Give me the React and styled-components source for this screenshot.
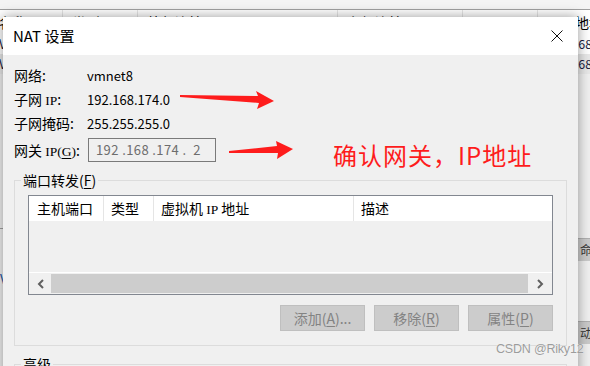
import React from "react";
import styled, { createGlobalStyle } from "styled-components";

const UI_FONT = `"Noto Sans CJK SC", "Noto Sans", sans-serif`;

const GlobalStyle = createGlobalStyle`
  html, body {
    margin: 0;
    padding: 0;
  }
  body {
    background: #f0f0f0;
    font-family: ${UI_FONT};
    overflow: hidden;
  }
`;

const Screen = styled.div`
  position: relative;
  width: 590px;
  height: 366px;
  overflow: hidden;
  background: #f0f0f0;
  color: #000;
`;

/* ---- the window behind the dialog ---- */

const BackWindow = styled.div`
  display: flex;
  flex-direction: column;
  height: 100%;
`;

const TopStrip = styled.div`
  height: 9px;
  background: #f4f4f4;
  border-bottom: 1px solid #a0a0a0;
`;

const BgTable = styled.div`
  margin-left: -3px;
  background: #fff;
`;

const BgLine = styled.div`
  display: flex;
  height: ${(p) => (p.$head ? 24 : 20)}px;
  background: ${(p) => (p.$selected ? "#e8e8e8" : "#fff")};
`;

const BgCell = styled.div`
  flex-shrink: 0;
  width: ${(p) => p.$w}px;
  padding-left: ${(p) => (p.$first ? 2 : 9)}px;
  box-sizing: border-box;
  border-right: ${(p) => (p.$head ? "1px solid #e5e5e5" : "none")};
  font-size: ${(p) => (p.$head ? 14 : 12.5)}px;
  line-height: ${(p) => (p.$head ? 24 : 20)}px;
  color: ${(p) => (p.$head ? "#000" : "#1a1a40")};
  white-space: nowrap;
  overflow: hidden;
`;

const BgLower = styled.div`
  flex: 1;
  display: flex;
`;

const BgMain = styled.div`
  flex: 1;
  margin-top: 154px;
  border-top: 1px solid #a0a0a0;
  padding: 40px 0 0 0;
  font-size: 13px;
  color: #2050a0;
`;

const BgSide = styled.div`
  width: 12px;
  margin-top: 164px;
  display: flex;
  flex-direction: column;
`;

const BgSideItem = styled.div`
  height: 22px;
  margin-top: ${(p) => p.$gap}px;
  padding-left: 2px;
  background: #cacaca;
  border-top: 1px solid #b0b0b0;
  font-size: 12px;
  line-height: 22px;
  white-space: nowrap;
  overflow: hidden;
  color: #333;
`;

/* ---- dialog ---- */

const Dialog = styled.section`
  position: absolute;
  left: 3px;
  top: 17px;
  width: 575px;
  height: 372px;
  background: #f0f0f0;
  box-shadow: 0 0 12px rgba(0, 0, 0, 0.4);
  display: flex;
  flex-direction: column;
`;

const TitleBar = styled.header`
  height: 38px;
  flex-shrink: 0;
  background: #fff;
  display: flex;
  align-items: center;
  justify-content: space-between;
  padding: 0 15px 0 10px;
`;

const Title = styled.h1`
  margin: 0;
  font-size: 15px;
  font-weight: 400;
  line-height: 20px;
`;

const CloseButton = styled.button`
  border: 0;
  padding: 0;
  background: transparent;
  width: 12px;
  height: 12px;
  display: flex;
`;

const Body = styled.div`
  padding: 8px 11px 0 11px;
  display: flex;
  flex-direction: column;
`;

const InfoRow = styled.div`
  display: flex;
  align-items: center;
  height: 24px;
  margin-top: ${(p) => p.$gap || 0}px;
`;

const Label = styled.span`
  width: 73px;
  flex-shrink: 0;
  font-size: 14px;
  white-space: nowrap;
`;

const Latin = styled.span`
  font-family: "Liberation Serif", serif;
  font-size: 13.5px;
`;

const Key = styled.span`
  text-decoration: underline;
  text-underline-offset: 2px;
`;

const Value = styled.span`
  font-size: 13px;
`;

const IpInput = styled.div`
  width: 128px;
  height: 24px;
  box-sizing: border-box;
  border: 1px solid #7a7a7a;
  padding-left: 7px;
  margin-left: 1px;
  color: #6d6d6d;
  font-size: 13px;
  line-height: 22px;
  letter-spacing: 0.4px;
  white-space: pre;
`;

const Group = styled.fieldset`
  margin: ${(p) => p.$top}px 0 0;
  padding: 6px 13px 14px;
  border: 1px solid #dcdcdc;
  min-width: 0;
`;

const Legend = styled.legend`
  margin-left: -7px;
  padding: 0 2px;
  font-size: 14px;
  line-height: 18px;
`;

const ListView = styled.div`
  height: 100px;
  box-sizing: border-box;
  border: 1px solid #828790;
  display: flex;
  flex-direction: column;
  background: #f0f0f0;
`;

const ListHeader = styled.div`
  display: flex;
  height: 25px;
  flex-shrink: 0;
  background: #fff;
`;

const HeaderCell = styled.div`
  width: ${(p) => (p.$w ? `${p.$w}px` : "auto")};
  flex: ${(p) => (p.$w ? "0 0 auto" : "1")};
  box-sizing: border-box;
  padding-left: ${(p) => p.$pad || 7}px;
  border-right: ${(p) => (p.$w ? "1px solid #e5e5e5" : "none")};
  font-size: 14px;
  line-height: 25px;
  white-space: nowrap;
`;

const ListBody = styled.div`
  flex: 1;
  border-bottom: 1px solid #fff;
`;

const HScroll = styled.div`
  height: 21px;
  flex-shrink: 0;
  display: flex;
`;

const ScrollButton = styled.div`
  width: ${(p) => p.$w}px;
  flex-shrink: 0;
  display: flex;
  align-items: center;
  justify-content: center;
`;

const ScrollTrack = styled.div`
  flex: 1;
  margin: 1px 0;
  background: #cdcdcd;
`;

const ButtonRow = styled.div`
  display: flex;
  justify-content: flex-end;
  gap: 9px;
  margin-top: 10px;
`;

const Button = styled.button`
  width: 85px;
  height: 26px;
  box-sizing: border-box;
  background: #cccccc;
  border: 1px solid #bfbfbf;
  color: #838383;
  font-family: ${UI_FONT};
  font-size: 14px;
  line-height: 24px;
  padding: 0;
`;

/* ---- annotations on top ---- */

const Arrow = styled.svg`
  position: absolute;
  left: ${(p) => p.$x}px;
  top: ${(p) => p.$y}px;
`;

const Note = styled.div`
  position: absolute;
  left: 333px;
  top: 143px;
  font-size: 24px;
  line-height: 24px;
  letter-spacing: 1px;
  color: #fe1c1c;
  white-space: nowrap;
`;

const Watermark = styled.div`
  position: absolute;
  left: 496px;
  top: 342px;
  font-family: "Liberation Sans", sans-serif;
  font-size: 12.5px;
  line-height: 14px;
  letter-spacing: -0.2px;
  color: #9c9c9c;
  text-shadow: 0 0 1px #fff;
`;

const bgCols = [66, 75, 200, 125, 75, 120];

const Chevron = ({ dir }) => (
  <svg width="7" height="10" viewBox="0 0 7 10">
    <polyline
      points={dir === "left" ? "6,1 2,5 6,9" : "1,1 5,5 1,9"}
      fill="none"
      stroke="#606060"
      strokeWidth="2"
    />
  </svg>
);

export default function App() {
  return (
    <Screen>
      <GlobalStyle />
      <BackWindow>
        <TopStrip />
        <BgTable>
          <BgLine $head>
            {["名称", "类型", "外部连接", "主机连接", "DHCP", "子网地址"].map((t, i) => (
              <BgCell key={t} $head $first={i === 0} $w={bgCols[i]}>
                {t}
              </BgCell>
            ))}
          </BgLine>
          <BgLine>
            {["VMnet1", "仅主机...", "-", "已连接", "已启用", "192.168.68.0"].map((t, i) => (
              <BgCell key={i} $first={i === 0} $w={bgCols[i]}>
                {t}
              </BgCell>
            ))}
          </BgLine>
          <BgLine $selected>
            {["VMnet8", "NAT 模式", "NAT 模式", "已连接", "已启用", "192.168.174.0"].map((t, i) => (
              <BgCell key={i} $first={i === 0} $w={bgCols[i]}>
                {t}
              </BgCell>
            ))}
          </BgLine>
        </BgTable>
        <BgLower>
          <BgMain>V</BgMain>
          <BgSide>
            <BgSideItem $gap={0}>命令</BgSideItem>
            <BgSideItem $gap={60}>动</BgSideItem>
          </BgSide>
        </BgLower>
      </BackWindow>

      <Dialog>
        <TitleBar>
          <Title>NAT 设置</Title>
          <CloseButton aria-label="关闭">
            <svg width="12" height="12" viewBox="0 0 12 12">
              <path d="M0.5 0.5 L11.5 11.5 M11.5 0.5 L0.5 11.5" stroke="#111" strokeWidth="1" />
            </svg>
          </CloseButton>
        </TitleBar>
        <Body>
          <InfoRow>
            <Label>网络:</Label>
            <Value>vmnet8</Value>
          </InfoRow>
          <InfoRow>
            <Label>
              子网 <Latin>IP</Latin>:
            </Label>
            <Value>192.168.174.0</Value>
          </InfoRow>
          <InfoRow>
            <Label>子网掩码:</Label>
            <Value>255.255.255.0</Value>
          </InfoRow>
          <InfoRow $gap={3}>
            <Label>
              网关 <Latin>
                IP(<Key>G</Key>)
              </Latin>
              :
            </Label>
            <IpInput>{"192 .168 .174 .  2"}</IpInput>
          </InfoRow>

          <Group $top={9}>
            <Legend>
              端口转发(<Key>F</Key>)
            </Legend>
            <ListView>
              <ListHeader>
                <HeaderCell $w={75} $pad={8}>主机端口</HeaderCell>
                <HeaderCell $w={50}>类型</HeaderCell>
                <HeaderCell $w={200}>
                  虚拟机 <Latin>IP</Latin> 地址
                </HeaderCell>
                <HeaderCell>描述</HeaderCell>
              </ListHeader>
              <ListBody />
              <HScroll>
                <ScrollButton $w={22}>
                  <Chevron dir="left" />
                </ScrollButton>
                <ScrollTrack />
                <ScrollButton $w={24}>
                  <Chevron dir="right" />
                </ScrollButton>
              </HScroll>
            </ListView>
            <ButtonRow>
              <Button disabled>
                添加(<Key>A</Key>)...
              </Button>
              <Button disabled>
                移除(<Key>R</Key>)
              </Button>
              <Button disabled>
                属性(<Key>P</Key>)
              </Button>
            </ButtonRow>
          </Group>

          <Group $top={9}>
            <Legend>高级</Legend>
          </Group>
        </Body>
      </Dialog>

      <Arrow $x={178} $y={89} width="98" height="22" viewBox="0 0 98 22">
        <path d="M2 6 L80 7 L78 2 L96 12 L79 20 L81 14 L2 8 Z" fill="#fe1c1c" />
      </Arrow>
      <Arrow $x={227} $y={139} width="68" height="22" viewBox="0 0 68 22">
        <path d="M2 12 L50 7 L49 2 L66 10 L50 20 L51 14 L2 14 Z" fill="#fe1c1c" />
      </Arrow>
      <Note>确认网关，IP地址</Note>
      <Watermark>CSDN @Riky12</Watermark>
    </Screen>
  );
}
